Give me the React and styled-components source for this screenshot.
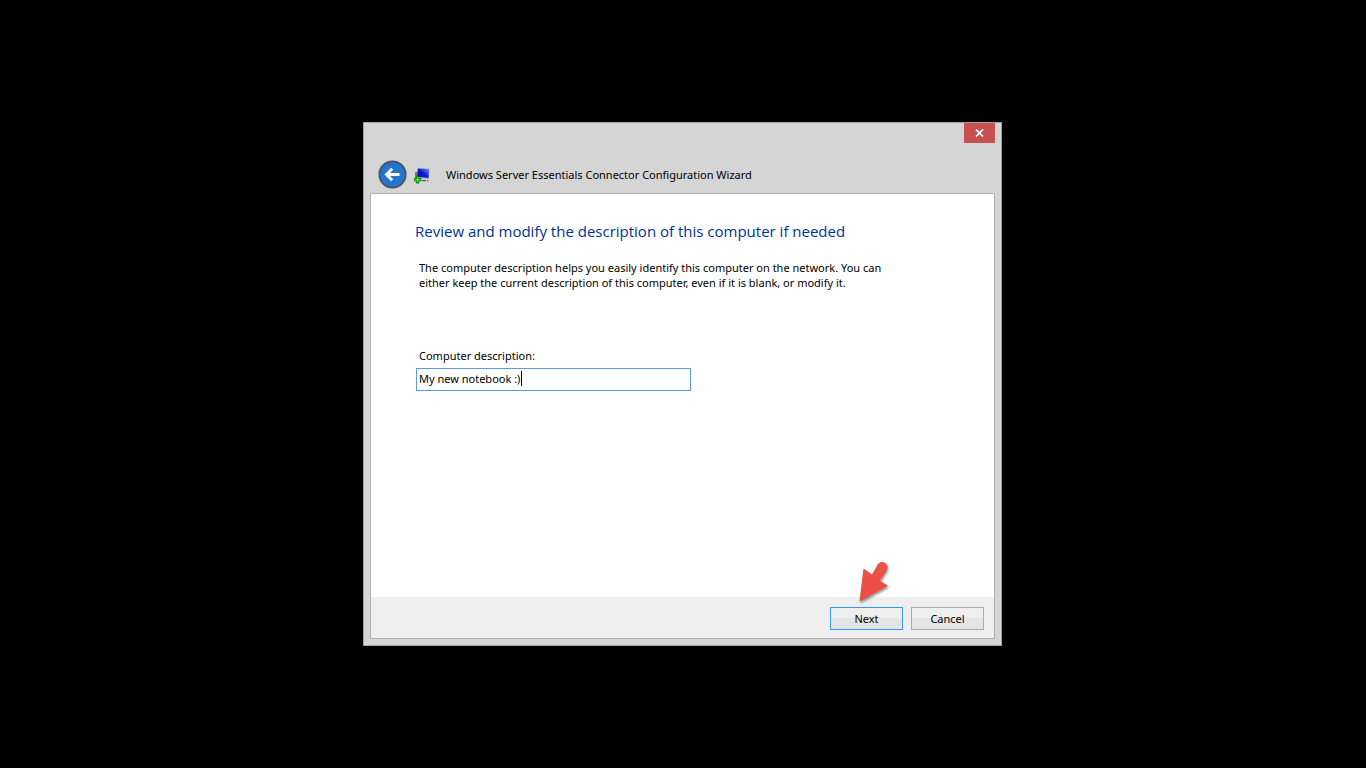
import React, { useState } from 'react';
import styled, { createGlobalStyle } from 'styled-components';

const GlobalStyle = createGlobalStyle`
  * {
    box-sizing: border-box;
  }

  body {
    margin: 0;
    background: #000;
    color: #000;
    font-family: 'Noto Sans', 'Open Sans', sans-serif;
    font-size: 11px;
    line-height: 15px;
  }

  button,
  input {
    font: inherit;
    color: inherit;
  }
`;

const Desktop = styled.div`
  display: flex;
  align-items: center;
  justify-content: center;
  min-height: 100vh;
  padding-right: 1px;
`;

const Window = styled.main`
  display: flex;
  flex-direction: column;
  width: 100%;
  max-width: 639px;
  border: 1px solid #a0a0a0;
  background: #d5d5d5;
`;

const TitleBar = styled.div`
  display: flex;
  justify-content: flex-end;
  padding: 0 6px;
`;

const CloseButton = styled.button`
  display: flex;
  align-items: center;
  justify-content: center;
  width: 31px;
  height: 20px;
  padding: 0;
  border: 0;
  background: #c75050;

  &:hover {
    background: #e04343;
  }
`;

const Header = styled.header`
  display: flex;
  align-items: center;
  padding: 17px 14px 3px;
`;

const BackButton = styled.button`
  display: flex;
  width: 30px;
  height: 30px;
  padding: 0;
  border: 0;
  background: none;
`;

const WizardIcon = styled.span`
  display: flex;
  margin: 0 15px 0 6px;
`;

const WizardTitle = styled.h1`
  margin: 0;
  padding-bottom: 2px;
  font-size: 11px;
  font-weight: 400;
`;

const Page = styled.form`
  display: flex;
  flex-direction: column;
  margin: 0 6px 6px;
  border: 1px solid #b0b0b0;
  background: #fff;
`;

const Content = styled.section`
  padding: 25px 44px;
  min-height: 403px;
`;

const Heading = styled.h2`
  margin: 0;
  color: #003399;
  font-family: 'Open Sans', 'Noto Sans', sans-serif;
  font-size: 15px;
  font-weight: 400;
  line-height: 24px;
`;

const Intro = styled.p`
  max-width: 490px;
  margin: 17px 0 58px;
  padding: 0 4px;
`;

const Field = styled.div`
  display: flex;
  flex-direction: column;
  align-items: flex-start;
  gap: 5px;

  label {
    padding: 0 4px;
  }
`;

const InputWrapper = styled.div`
  position: relative;
  width: 100%;
  max-width: 277px;
  padding: 0 1px;
`;

const TextInput = styled.input`
  display: block;
  width: 100%;
  height: 23px;
  padding: 0 2px 2px;
  border: 1px solid #569de5;
  border-radius: 0;
  background: #fff;
  outline: none;
  caret-color: transparent;
`;

// Steady caret that follows the typed text
const CaretLayer = styled.div`
  position: absolute;
  top: 3px;
  left: 4px;
  height: 15px;
  padding-right: 1px;
  border-right: 1px solid #000;
  color: transparent;
  white-space: pre;
  pointer-events: none;
`;

const Footer = styled.footer`
  position: relative;
  display: flex;
  justify-content: flex-end;
  gap: 8px;
  padding: 10px 10px 8px;
  background: #eee;
`;

const Button = styled.button`
  width: 73px;
  height: 23px;
  padding: 0;
  border: 1px solid ${props => (props.$primary ? '#3399ff' : '#acacac')};
  background: linear-gradient(#efefef 0 50%, #e5e5e5 50% 100%);

  &:hover {
    border-color: #7eb4ea;
  }
`;

const Pointer = styled.svg`
  position: absolute;
  top: -40px;
  right: 103px;
  pointer-events: none;
`;

const PointerShape = styled.path`
  fill: #ec4f46;
  filter: drop-shadow(1px 2px 1px rgba(0, 0, 0, 0.4));
`;

function CloseIcon() {
  return (
    <svg width="9" height="8" viewBox="0 0 9 8" aria-hidden="true">
      <path d="M1 .5 8 7.5M8 .5 1 7.5" stroke="#fff" strokeWidth="1.7" />
    </svg>
  );
}

function BackIcon() {
  return (
    <svg width="30" height="30" viewBox="0 0 30 30" aria-hidden="true">
      <circle cx="14.5" cy="14.5" r="13.2" fill="#2574cc" stroke="#46525e" strokeWidth="1.7" />
      <path d="M8.5 14.5H21.5M14.2 8.8 8.5 14.5 14.2 20.2" fill="none" stroke="#fff" strokeWidth="2.9" />
    </svg>
  );
}

function ComputerIcon() {
  return (
    <svg width="17" height="17" viewBox="0 0 17 17" aria-hidden="true">
      <defs>
        <linearGradient id="screen" x1="0" y1="1" x2="1" y2="0">
          <stop offset="0" stopColor="#0610a0" />
          <stop offset=".5" stopColor="#1018c8" />
          <stop offset="1" stopColor="#7c9cf4" />
        </linearGradient>
      </defs>
      <path d="M1 5h3v8H1z" fill="#77777f" />
      <path d="M3.8 1.5 15.2 1.7 14.6 11 3.3 10.3z" fill="url(#screen)" />
      <path d="M3.3 10.3 14.6 11v1L3.3 11.5z" fill="#a8b0c0" />
      <path d="M8 13h4v1.2H8zM13 13.2h1.5v1H13z" fill="#555b66" />
      <path d="M2.4 9.3h2.4v2.2h2.2v2.4H4.8v2.2H2.4v-2.2H.4v-2.4h2z" fill="#22cc22" stroke="#087808" strokeWidth=".9" />
      <path d="M3.6 10.2v5M1.2 12.7h5" stroke="#4ee040" strokeWidth="1" />
    </svg>
  );
}

function ArrowPointer() {
  return (
    <Pointer width="36" height="50" viewBox="0 0 36 50" aria-hidden="true">
      <PointerShape d="M4.5 44.5 8.5 11.5 17 17.5 22.5 8A5 5 0 0 1 32 12.5L25 23.8 33 28.8z" />
    </Pointer>
  );
}

export default function App() {
  const [description, setDescription] = useState('My new notebook :)');

  return (
    <>
      <GlobalStyle />
      <Desktop>
        <Window>
          <TitleBar>
            <CloseButton type="button" aria-label="Close">
              <CloseIcon />
            </CloseButton>
          </TitleBar>
          <Header>
            <BackButton type="button" aria-label="Back">
              <BackIcon />
            </BackButton>
            <WizardIcon>
              <ComputerIcon />
            </WizardIcon>
            <WizardTitle>Windows Server Essentials Connector Configuration Wizard</WizardTitle>
          </Header>
          <Page onSubmit={e => e.preventDefault()}>
            <Content>
              <Heading>Review and modify the description of this computer if needed</Heading>
              <Intro>
                The computer description helps you easily identify this computer on the network. You can
                either keep the current description of this computer, even if it is blank, or modify it.
              </Intro>
              <Field>
                <label htmlFor="description">Computer description:</label>
                <InputWrapper>
                  <TextInput
                    id="description"
                    type="text"
                    value={description}
                    onChange={e => setDescription(e.target.value)}
                  />
                  <CaretLayer aria-hidden="true">{description}</CaretLayer>
                </InputWrapper>
              </Field>
            </Content>
            <Footer>
              <Button type="submit" $primary>
                Next
              </Button>
              <Button type="button">Cancel</Button>
              <ArrowPointer />
            </Footer>
          </Page>
        </Window>
      </Desktop>
    </>
  );
}
